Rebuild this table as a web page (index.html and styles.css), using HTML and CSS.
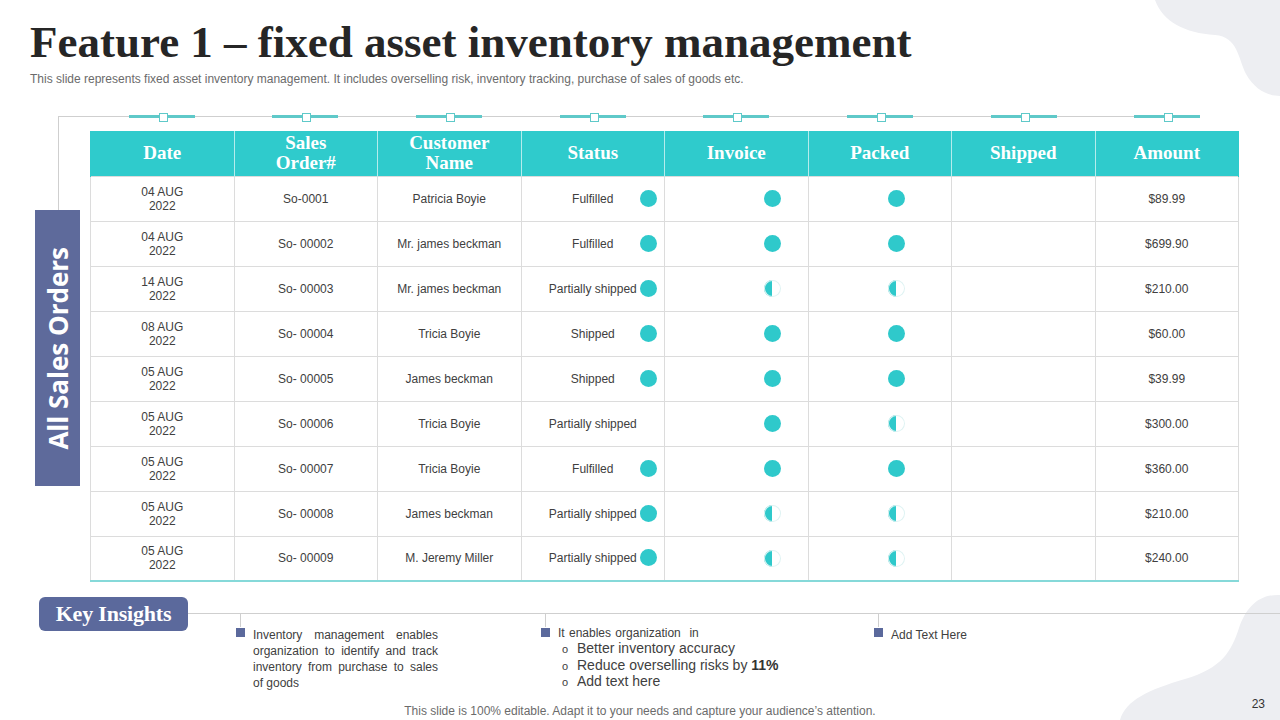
FILE: index.html
```html
<!DOCTYPE html>
<html lang="en">
<head>
<meta charset="utf-8">
<title>Feature 1 – fixed asset inventory management</title>
<link rel="stylesheet" href="styles.css">
</head>
<body>
<div class="slide">
  <svg class="blob blob-top" width="130" height="100" viewBox="1150 0 130 100"><path d="M1155,0 C1163,22 1185,33 1215,35 C1238,37 1238,58 1246,74 C1255,90 1268,96 1280,96 L1280,0 Z"/></svg>
  <svg class="blob blob-bottom" width="165" height="130" viewBox="1115 590 165 130"><path d="M1280,595 C1258,594 1246,608 1239,628 C1231,652 1222,668 1185,679 C1148,690 1126,700 1120,720 L1280,720 Z"/></svg>

  <h1 class="title">Feature 1 – fixed asset inventory management</h1>
  <p class="subtitle">This slide represents fixed asset inventory management. It includes overselling risk, inventory tracking, purchase of sales of goods etc.</p>

  <div class="board">
    <div class="rail">
      <div class="stem"></div>
      <div class="side-label"><span>All Sales Orders</span></div>
    </div>
    <div class="table-area">
      <div class="markers">
        <span class="mk"></span><span class="mk"></span><span class="mk"></span><span class="mk"></span>
        <span class="mk"></span><span class="mk"></span><span class="mk"></span><span class="mk"></span>
      </div>
      <table class="orders">
        <thead>
          <tr>
            <th>Date</th>
            <th>Sales<br>Order#</th>
            <th>Customer<br>Name</th>
            <th>Status</th>
            <th>Invoice</th>
            <th>Packed</th>
            <th>Shipped</th>
            <th>Amount</th>
          </tr>
        </thead>
        <tbody>
          <tr><td>04 AUG<br>2022</td><td>So-0001</td><td>Patricia Boyie</td><td class="status">Fulfilled<span class="dot"></span></td><td class="inv"><span class="dot"></span></td><td class="pck"><span class="dot"></span></td><td></td><td>$89.99</td></tr>
          <tr><td>04 AUG<br>2022</td><td>So- 00002</td><td>Mr. james beckman</td><td class="status">Fulfilled<span class="dot"></span></td><td class="inv"><span class="dot"></span></td><td class="pck"><span class="dot"></span></td><td></td><td>$699.90</td></tr>
          <tr><td>14 AUG<br>2022</td><td>So- 00003</td><td>Mr. james beckman</td><td class="status">Partially shipped<span class="dot"></span></td><td class="inv"><span class="dot half"></span></td><td class="pck"><span class="dot half"></span></td><td></td><td>$210.00</td></tr>
          <tr><td>08 AUG<br>2022</td><td>So- 00004</td><td>Tricia Boyie</td><td class="status">Shipped<span class="dot"></span></td><td class="inv"><span class="dot"></span></td><td class="pck"><span class="dot"></span></td><td></td><td>$60.00</td></tr>
          <tr><td>05 AUG<br>2022</td><td>So- 00005</td><td>James beckman</td><td class="status">Shipped<span class="dot"></span></td><td class="inv"><span class="dot"></span></td><td class="pck"><span class="dot"></span></td><td></td><td>$39.99</td></tr>
          <tr><td>05 AUG<br>2022</td><td>So- 00006</td><td>Tricia Boyie</td><td class="status">Partially shipped</td><td class="inv"><span class="dot"></span></td><td class="pck"><span class="dot half"></span></td><td></td><td>$300.00</td></tr>
          <tr><td>05 AUG<br>2022</td><td>So- 00007</td><td>Tricia Boyie</td><td class="status">Fulfilled<span class="dot"></span></td><td class="inv"><span class="dot"></span></td><td class="pck"><span class="dot"></span></td><td></td><td>$360.00</td></tr>
          <tr><td>05 AUG<br>2022</td><td>So- 00008</td><td>James beckman</td><td class="status">Partially shipped<span class="dot"></span></td><td class="inv"><span class="dot half"></span></td><td class="pck"><span class="dot half"></span></td><td></td><td>$210.00</td></tr>
          <tr><td>05 AUG<br>2022</td><td>So- 00009</td><td>M. Jeremy Miller</td><td class="status">Partially shipped<span class="dot"></span></td><td class="inv"><span class="dot half"></span></td><td class="pck"><span class="dot half"></span></td><td></td><td>$240.00</td></tr>
        </tbody>
      </table>
    </div>
  </div>

  <div class="insights">
    <div class="pill">Key Insights</div>
    <div class="cols">
      <div class="col col1">
        <span class="tick"></span>
        <div class="item">
          <span class="sq"></span>
          <p class="txt just">Inventory management enables organization to identify and track inventory from purchase to sales of goods</p>
        </div>
      </div>
      <div class="col col2">
        <span class="tick"></span>
        <div class="item">
          <span class="sq"></span>
          <div class="txt">
            <p class="lead">It enables organization&nbsp; in</p>
            <ul class="sub">
              <li>Better inventory accuracy</li>
              <li>Reduce overselling risks by <b>11%</b></li>
              <li>Add text here</li>
            </ul>
          </div>
        </div>
      </div>
      <div class="col col3">
        <span class="tick"></span>
        <div class="item">
          <span class="sq"></span>
          <p class="txt">Add Text Here</p>
        </div>
      </div>
    </div>
  </div>

  <p class="footer">This slide is 100% editable. Adapt it to your needs and capture your audience’s attention.</p>
  <span class="page-no">23</span>
</div>
</body>
</html>
```

FILE: styles.css
```css
* { box-sizing: border-box; }

html, body {
  margin: 0;
  padding: 0;
  background: #ffffff;
}

.slide {
  position: relative;
  z-index: 0;
  width: 1280px;
  height: 720px;
  overflow: hidden;
  background: #ffffff;
  font-family: "Liberation Sans", Arial, sans-serif;
  color: #404040;
  display: flex;
  flex-direction: column;
  padding-top: 16px;
}

.blob {
  position: absolute;
  z-index: -1;
  fill: #edeef2;
}
.blob-top { top: 0; right: 0; }
.blob-bottom { bottom: 0; right: 0; }

.title {
  margin: 0 0 0 30px;
  font-family: "Liberation Serif", "Times New Roman", serif;
  font-weight: 700;
  font-size: 45px;
  line-height: 52px;
  color: #262626;
  white-space: nowrap;
}

.subtitle {
  margin: 4px 0 0 30px;
  font-size: 12px;
  line-height: 14px;
  color: #6b6b6b;
}

/* board: rail + table */
.board {
  display: flex;
  margin: 30px 0 0 35px;
}

.rail {
  width: 55px;
  display: flex;
  flex-direction: column;
}

.stem {
  margin-left: 23px;
  width: 32px;
  height: 94px;
  border-top: 1px solid #cfcfcf;
  border-left: 1px solid #cfcfcf;
}

.side-label {
  width: 45px;
  height: 276px;
  background: #5e6a9b;
  display: flex;
  align-items: center;
  justify-content: center;
}
.side-label span {
  writing-mode: vertical-rl;
  transform: rotate(180deg);
  font-family: "Open Sans", "DejaVu Sans", sans-serif;
  font-weight: 700;
  font-size: 26px;
  color: #ffffff;
  white-space: nowrap;
}

.table-area {
  width: 1149px;
}

.markers {
  display: grid;
  grid-template-columns: repeat(8, 1fr);
  height: 15px;
  background: linear-gradient(#cfcfcf, #cfcfcf) no-repeat 0 0 / 1110px 1px;
}
.mk {
  justify-self: center;
  position: relative;
  width: 66px;
  height: 3px;
  margin-top: -1px;
  background: #5fc9c9;
}
.mk::after {
  content: "";
  position: absolute;
  left: 30px;
  top: -2px;
  width: 7px;
  height: 7px;
  background: #ffffff;
  border: 1px solid #5fc9c9;
}

.orders {
  width: 1149px;
  table-layout: fixed;
  border-collapse: collapse;
}

.orders th {
  height: 45px;
  padding: 0;
  background: #2fcbcc;
  color: #ffffff;
  font-family: "Liberation Serif", "Times New Roman", serif;
  font-weight: 700;
  font-size: 19px;
  line-height: 20px;
  text-align: center;
  border-left: 1px solid #b5ecec;
  border-right: 1px solid #b5ecec;
}
.orders th:first-child { border-left-color: #2fcbcc; }
.orders th:last-child { border-right-color: #2fcbcc; }

.orders td {
  height: 45px;
  padding: 0;
  border: 1px solid #dcdcdc;
  font-size: 12px;
  line-height: 14px;
  color: #404040;
  text-align: center;
  vertical-align: middle;
}
.orders tbody tr:last-child td {
  border-bottom: 2px solid #86d9d9;
}

.orders td.status {
  position: relative;
}
.status .dot {
  position: absolute;
  right: 7px;
  top: 50%;
  margin-top: -9px;
}

.orders td.inv {
  text-align: right;
  padding-right: 27px;
}
.orders td.pck {
  text-align: right;
  padding-right: 46px;
}

.dot {
  display: inline-block;
  width: 17px;
  height: 17px;
  border-radius: 50%;
  background: #2fc9cb;
  vertical-align: middle;
}
.dot.half {
  background: linear-gradient(90deg, #2fc9cb 50%, #ffffff 50%);
  box-shadow: inset 0 0 0 1px #dff3f3;
}

/* insights */
.insights {
  display: flex;
  align-items: flex-start;
  margin: 15px 0 0 39px;
}

.pill {
  width: 149px;
  height: 34px;
  border-radius: 6px;
  background: #5b699c;
  color: #ffffff;
  font-family: "Liberation Serif", "Times New Roman", serif;
  font-weight: 700;
  font-size: 22px;
  line-height: 34px;
  text-align: center;
  letter-spacing: -0.2px;
}

.cols {
  flex: 1;
  display: flex;
  margin-top: 16px;
  border-top: 1px solid #cfcfcf;
}

.col { display: flex; flex-direction: column; }
.col1 { margin-left: 48px; width: 305px; }
.col2 { width: 333px; }
.col3 { flex: 1; }

.tick {
  width: 1px;
  height: 13px;
  margin-left: 4px;
  background: #cfcfcf;
}

.item {
  display: flex;
  align-items: flex-start;
}

.sq {
  flex: none;
  width: 9px;
  height: 9px;
  margin-top: 1px;
  background: #5b699c;
}

.txt {
  margin: 0 0 0 8px;
  font-size: 12px;
  line-height: 16px;
  color: #404040;
}
.txt .lead {
  margin: 0;
  line-height: 13px;
  word-spacing: 1px;
}
.txt.just {
  width: 185px;
  text-align: justify;
}

.sub {
  list-style: none;
  margin: 0;
  padding: 0 0 0 4px;
  font-size: 14px;
  line-height: 16.5px;
}
.sub li::before {
  content: "o";
  display: inline-block;
  width: 15px;
  font-size: 11px;
  line-height: 1;
}
.sub b { font-weight: 700; color: #333333; }

.footer {
  margin: auto 0 0 0;
  padding-bottom: 2px;
  text-align: center;
  font-size: 12px;
  line-height: 14px;
  color: #6b6b6b;
}

.page-no {
  position: absolute;
  right: 15px;
  bottom: 9px;
  font-size: 12px;
  color: #333333;
}
```
